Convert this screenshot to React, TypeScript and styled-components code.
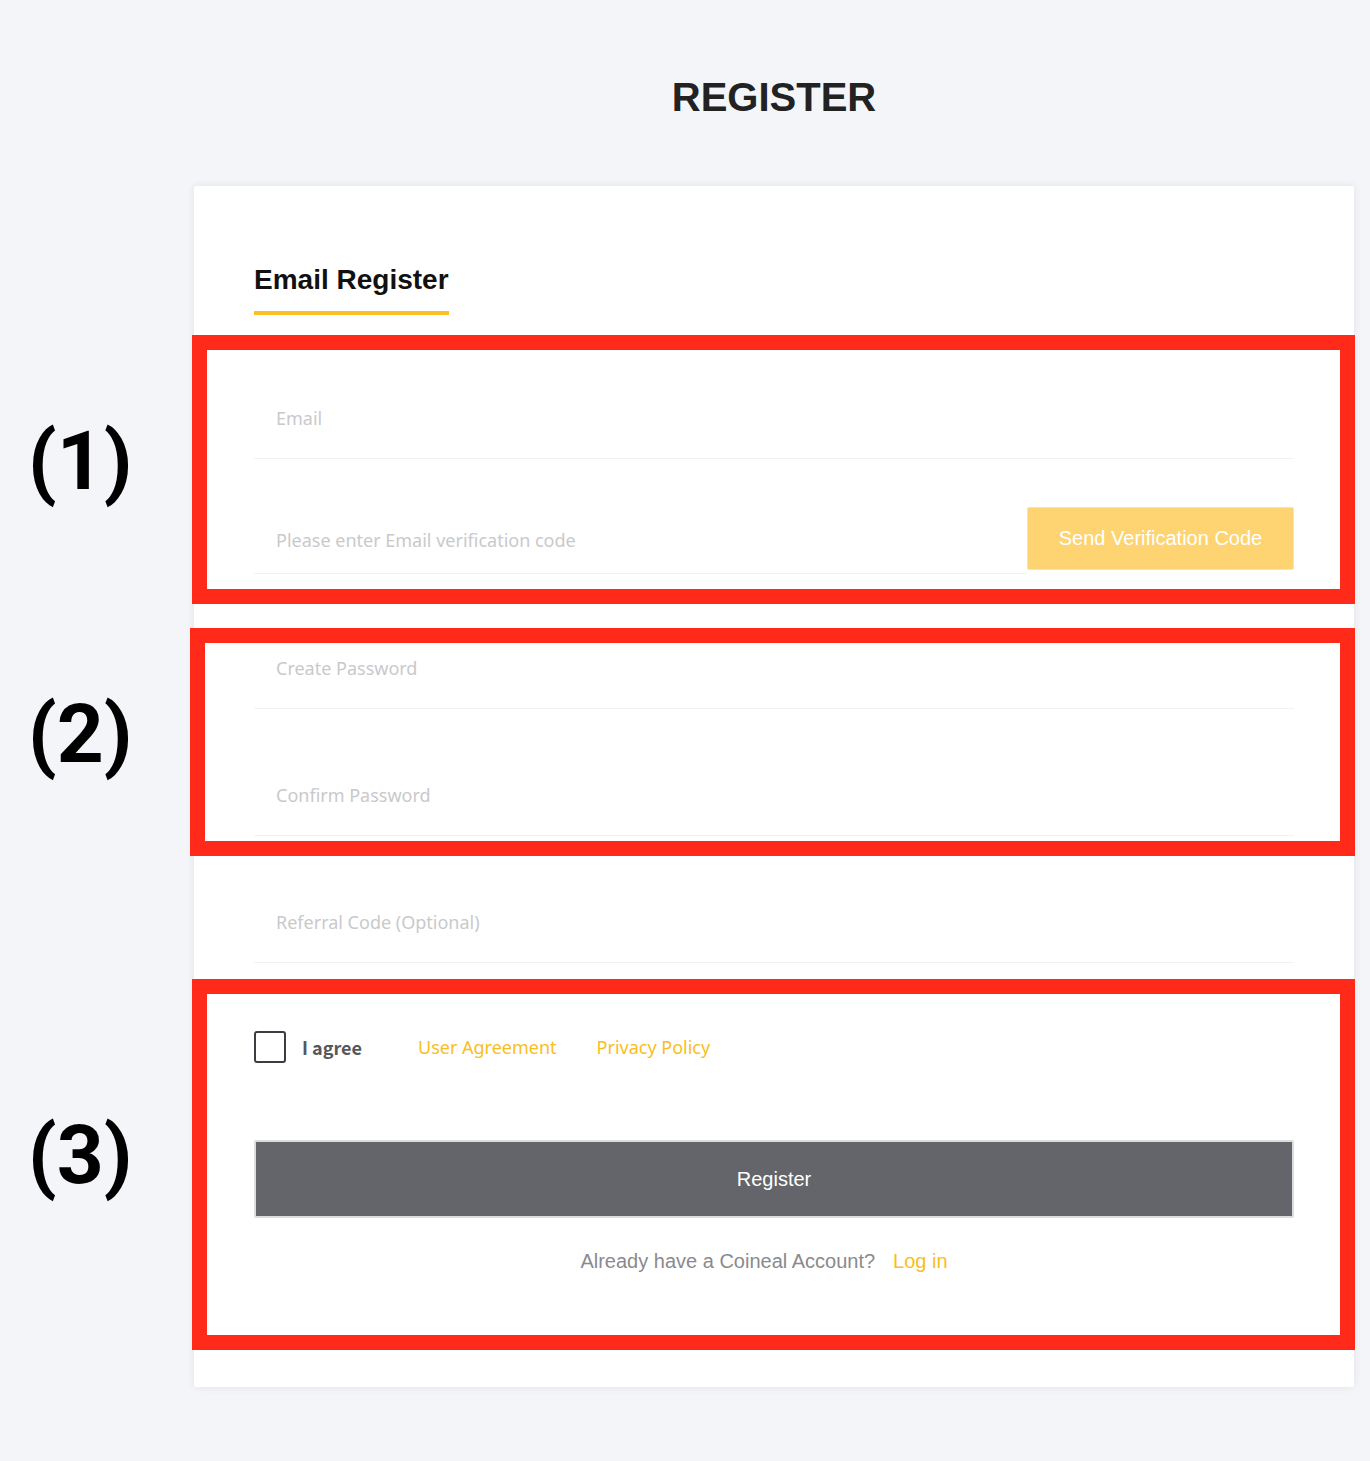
import { FC, ReactNode } from "react";
import styled, { createGlobalStyle } from "styled-components";

const GlobalStyle = createGlobalStyle`
  * { box-sizing: border-box; }
  body {
    margin: 0;
    background: #f4f5f9;
    font-family: "Liberation Sans", Arial, sans-serif;
  }
`;

type Box = { top: number; right: number; bottom: number; left: number };

type SectionProps = {
  label: string;
  labelTop: number;
  box: Box;
  children: ReactNode;
};

// red annotation frame + number drawn over a group of fields
const Annotated: FC<SectionProps> = ({ label, labelTop, box, children }) => (
  <Section>
    {children}
    <RedBox $box={box} />
    <Label $top={labelTop}>{label}</Label>
  </Section>
);

const Field: FC<{ placeholder: string; type?: string; mt?: number }> = ({
  placeholder,
  type = "text",
  mt = 0,
}) => (
  <FieldRow $mt={mt}>
    <Input type={type} placeholder={placeholder} />
  </FieldRow>
);

const App: FC = () => {
  return (
    <>
      <GlobalStyle />
      <Page>
        <Title>REGISTER</Title>
        <Card>
          <Tab>Email Register</Tab>

          <Annotated
            label="(1)"
            labelTop={83}
            box={{ top: -43, right: -61, bottom: -30, left: -62 }}
          >
            <Field placeholder="Email" mt={63} />
            <CodeRow>
              <CodeInput>
                <Input placeholder="Please enter Email verification code" />
              </CodeInput>
              <SendButton>Send Verification Code</SendButton>
            </CodeRow>
          </Annotated>

          <Spacer $h={54} />
          <Annotated
            label="(2)"
            labelTop={106}
            box={{ top: 0, right: -61, bottom: -20, left: -64 }}
          >
            <Field placeholder="Create Password" type="password" />
            <Field placeholder="Confirm Password" type="password" mt={46} />
          </Annotated>

          <Field placeholder="Referral Code (Optional)" mt={46} />

          <Spacer $h={68} />
          <Annotated
            label="(3)"
            labelTop={124}
            box={{ top: -52, right: -61, bottom: -77, left: -62 }}
          >
            <AgreeRow>
              <Checkbox />
              <AgreeText>I agree</AgreeText>
              <AgreeLink>User Agreement</AgreeLink>
              <AgreeLink>Privacy Policy</AgreeLink>
            </AgreeRow>
            <RegisterButton>Register</RegisterButton>
            <LoginLine>
              Already have a Coineal Account?
              <LoginLink>Log in</LoginLink>
            </LoginLine>
          </Annotated>
        </Card>
      </Page>
    </>
  );
};

const Page = styled.div`
  padding: 74px 0 74px 194px;
  width: 1370px;
`;

const Title = styled.h1`
  margin: 0 0 66px;
  width: 1160px;
  text-align: center;
  font-size: 40px;
  line-height: 46px;
  font-weight: 700;
  color: #222;
`;

const Card = styled.div`
  width: 1160px;
  background: #fff;
  padding: 77px 60px 114px;
  box-shadow: 0 0 8px rgba(0, 0, 0, 0.08);
  border-radius: 2px;
`;

const Tab = styled.div`
  display: inline-block;
  font-size: 28px;
  line-height: 34px;
  font-weight: 700;
  color: #111;
  padding-bottom: 14px;
  border-bottom: 4px solid #fcc024;
`;

const Section = styled.div`
  position: relative;
`;

const RedBox = styled.div<{ $box: Box }>`
  position: absolute;
  top: ${({ $box }) => $box.top}px;
  right: ${({ $box }) => $box.right}px;
  bottom: ${({ $box }) => $box.bottom}px;
  left: ${({ $box }) => $box.left}px;
  border: 15px solid #ff2a1a;
  pointer-events: none;
`;

const Label = styled.div<{ $top: number }>`
  position: absolute;
  left: -226px;
  top: ${({ $top }) => $top}px;
  transform: translateY(-50%);
  font-family: Roboto, "Liberation Sans", sans-serif;
  font-size: 82px;
  line-height: 1;
  font-weight: 700;
  color: #000;
`;

const Spacer = styled.div<{ $h: number }>`
  height: ${({ $h }) => $h}px;
`;

const FieldRow = styled.div<{ $mt: number }>`
  margin-top: ${({ $mt }) => $mt}px;
  height: 81px;
  display: flex;
  align-items: center;
  border-bottom: 1px solid #f1f2f6;
`;

const Input = styled.input`
  width: 100%;
  border: none;
  outline: none;
  background: transparent;
  padding: 0 0 0 22px;
  font-family: "Noto Sans", sans-serif;
  font-size: 18px;
  color: #333;

  &::placeholder {
    color: #c9c9cc;
  }
`;

const CodeRow = styled.div`
  margin-top: 48px;
  height: 67px;
  display: flex;
`;

const CodeInput = styled.div`
  flex: 1;
  display: flex;
  align-items: center;
  border-bottom: 1px solid #f1f2f6;
`;

const SendButton = styled.button`
  width: 267px;
  height: 63px;
  background: #fdd471;
  border: 1px solid #e4e4e8;
  border-radius: 2px;
  color: #fff;
  font-family: "Liberation Sans", Arial, sans-serif;
  font-size: 20px;
  cursor: pointer;
`;

const AgreeRow = styled.div`
  display: flex;
  align-items: center;
  height: 32px;
`;

const Checkbox = styled.span`
  width: 32px;
  height: 32px;
  border: 2px solid #3b3d42;
  border-radius: 3px;
  margin-right: 16px;
`;

const AgreeText = styled.span`
  font-family: "Noto Sans CJK KR", "Noto Sans", sans-serif;
  font-size: 18px;
  font-weight: 600;
  color: #55575c;
  margin-right: 56px;
`;

const AgreeLink = styled.a`
  font-family: "Noto Sans", sans-serif;
  font-size: 18px;
  color: #fabd1e;
  margin-right: 40px;
  cursor: pointer;
`;

const RegisterButton = styled.button`
  display: block;
  width: 100%;
  height: 78px;
  margin-top: 77px;
  background: #63656a;
  border: 2px solid #dcdcde;
  border-radius: 2px;
  color: #fff;
  font-family: "Liberation Sans", Arial, sans-serif;
  font-size: 20px;
  cursor: pointer;
`;

const LoginLine = styled.div`
  margin-top: 32px;
  text-align: center;
  font-size: 20px;
  line-height: 23px;
  color: #8a8a8e;
`;

const LoginLink = styled.a`
  color: #fabd1e;
  margin: 0 20px 0 18px;
  cursor: pointer;
`;

export default App;
